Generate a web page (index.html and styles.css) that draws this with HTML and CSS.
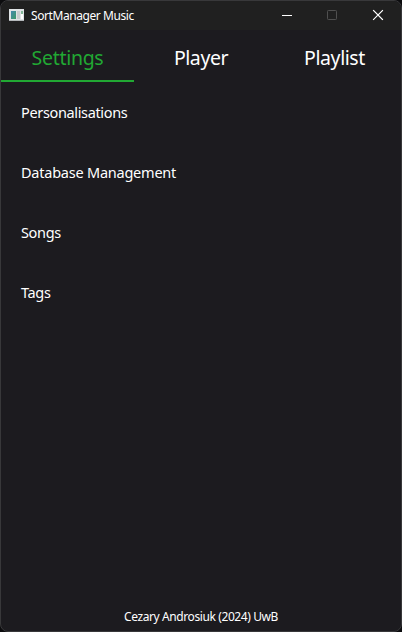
FILE: index.html
```html
<!DOCTYPE html>
<html lang="en">
<head>
<meta charset="utf-8">
<title>SortManager Music</title>
<link rel="stylesheet" href="styles.css">
</head>
<body>
<div class="window">
  <header class="titlebar">
    <svg class="app-icon" width="15" height="13" viewBox="0 0 15 13">
      <defs><linearGradient id="pane" x1="0" y1="0" x2="1" y2="1"><stop offset="0" stop-color="#4389ad"/><stop offset="1" stop-color="#3c9a66"/></linearGradient></defs>
      <path fill="#dfe3e5" d="M0 0h15v12H0z"/>
      <path fill="#b4b8ba" d="M0 11h15v1H0z"/>
      <path fill="url(#pane)" d="M2 2h5v8H2z"/>
      <path fill="#c8cccd" d="M8 2h3v8H8z"/>
      <path fill="#fff" d="M12 2h2v8h-2z"/>
      <path fill="#83b798" d="M12 2h2v3h-2z"/>
    </svg>
    <h1 class="title">SortManager Music</h1>
    <div class="controls">
      <svg width="46" height="29" viewBox="0 0 46 29"><path fill="#fff" d="M19 14h10v1H19z"/></svg>
      <svg width="46" height="29" viewBox="0 0 46 29"><rect x="18.5" y="9.5" width="9" height="9" rx=".8" fill="none" stroke="#505050"/></svg>
      <svg width="46" height="29" viewBox="0 0 46 29"><path d="M18.5 9.5l9 9m0-9l-9 9" fill="none" stroke="#fff" stroke-width="1.1" stroke-linecap="square"/></svg>
    </div>
  </header>
  <nav class="tabs">
    <a class="tab active">Settings</a>
    <a class="tab">Player</a>
    <a class="tab">Playlist</a>
  </nav>
  <ul class="menu">
    <li>Personalisations</li>
    <li class="wide">Database Management</li>
    <li>Songs</li>
    <li>Tags</li>
  </ul>
  <footer class="footer">Cezary Androsiuk (2024) UwB</footer>
</div>
</body>
</html>
```

FILE: styles.css
```css
* { box-sizing: border-box; }
body {
  margin: 0;
  background: #0c0c0e;
  font-family: "Noto Sans", "Open Sans", sans-serif;
  color: #fff;
}
.window {
  display: flex;
  flex-direction: column;
  width: 402px;
  height: 632px;
  border: 1px solid #38383a;
  border-radius: 8px;
  background: #1c1b1f;
  overflow: hidden;
}
.titlebar {
  display: flex;
  align-items: center;
  height: 29px;
  padding-left: 8px;
  background: #202020;
}
.app-icon { display: block; }
.title {
  flex: 1;
  margin: 0 0 0 7px;
  font-size: 12px;
  font-weight: 400;
  line-height: 28px;
  letter-spacing: -0.42px;
  white-space: nowrap;
}
.controls { display: flex; }
.controls svg { display: block; }
.tabs {
  display: grid;
  grid-template-columns: 133px 134px 133px;
  height: 52px;
}
.tab {
  display: flex;
  justify-content: center;
  height: 52px;
  padding-top: 4px;
  border-bottom: 2px solid transparent;
  font-size: 19.5px;
  line-height: 48px;
  letter-spacing: -0.42px;
}
.active {
  color: #21a833;
  border-color: #21a833;
  letter-spacing: -0.3px;
}
.menu {
  flex: 1;
  margin: 0;
  padding: 0 0 0 20px;
  list-style: none;
  font-size: 14.5px;
  line-height: 60px;
  letter-spacing: -0.35px;
}
.menu li { height: 60px; }
.menu .wide { letter-spacing: -0.23px; }
.footer {
  height: 29px;
  text-align: center;
  font-size: 12px;
  line-height: 30px;
  letter-spacing: -0.4px;
}
```
